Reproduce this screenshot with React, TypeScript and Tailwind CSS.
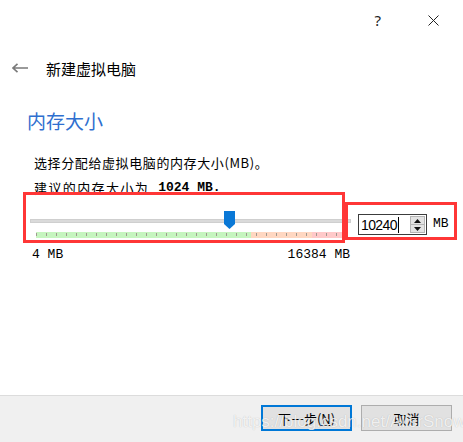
import React from "react";

const cjk = "font-['Noto_Sans_CJK_SC','Noto_Sans',sans-serif]";
const mono = "font-['Liberation_Mono','Noto_Sans_CJK_SC',monospace]";

function App() {
	const min = 4;
	const max = 16384;
	const value = 10240;
	const trackWidth = 321;
	const thumbLeft = Math.round(((value - min) / (max - min)) * (trackWidth - 11));
	const ticks = Array.from({ length: 31 });

	return (
		<div
			className={
				"relative w-[463px] h-[442px] overflow-hidden bg-white flex flex-col text-black " +
				cjk
			}
		>
			{/* title bar */}
			<div className="flex items-center justify-end h-[40px] pr-[24px] gap-[47px]">
				<span className="text-[15px] leading-none text-[#222] font-['Noto_Sans',sans-serif]">?</span>
				<svg width="11" height="11" viewBox="0 0 11 11">
					<path d="M0.5 0.5 L10.5 10.5 M10.5 0.5 L0.5 10.5" stroke="#222" strokeWidth="1" />
				</svg>
			</div>

			{/* header */}
			<div className="flex items-center h-[24px] mt-[16px] pl-[12px]">
				<svg width="16" height="10" viewBox="0 0 16 10">
					<path d="M1 5 H16 M5.5 0.8 L1 5 L5.5 9.2" stroke="#7a7a7a" strokeWidth="1.6" fill="none" />
				</svg>
				<span className="ml-[18px] text-[15px] leading-none">新建虚拟电脑</span>
			</div>

			{/* heading */}
			<div className="pl-[27px] mt-[28px] h-[24px] flex items-center text-[19px] leading-none text-[#2f6fcf]">
				内存大小
			</div>

			<div className="pl-[34px] mt-[20px] h-[20px] flex items-center text-[13px] tracking-[0.6px] leading-none">
				选择分配给虚拟电脑的内存大小(MB)。
			</div>
			<div className="pl-[34px] mt-[5px] h-[20px] flex items-center text-[13px] tracking-[1.4px] leading-none">
				建议的内存大小为
				<span className={"ml-[9px] font-bold tracking-normal text-[13px] " + mono}>1024 MB.</span>
			</div>

			{/* slider row */}
			<div className="flex items-start mt-[12px]">
				<div className="relative ml-[30px] w-[321px] h-[30px]">
					<div className="absolute left-0 right-0 top-[10px] h-[4px] bg-[#dadada] border border-[#cfcfcf]" />
					<div className="absolute top-[2px]" style={{ left: thumbLeft }}>
						<svg width="11" height="18" viewBox="0 0 11 18">
							<path d="M0 0 H11 V13 L5.5 18 L0 13 Z" fill="#0a78d6" />
						</svg>
					</div>
					<div className="absolute left-[6px] top-[23px] w-[306px] h-[6px] flex">
						<div className="w-[215px] bg-[#c6f5bf]" />
						<div className="w-[61px] bg-[#ffd7c1]" />
						<div className="flex-1 bg-[#ffc9c9]" />
						<div className="absolute inset-0 flex gap-[9px] pt-[1px]">
							{ticks.map((_, i) => (
								<div key={i} className="w-px h-[3px] bg-[#a09a90]" />
							))}
						</div>
					</div>
				</div>

				<div className="ml-[7px] mt-[5px] flex w-[69px] h-[21px] border border-[#3c3c3c] bg-white">
					<div className="flex-1 flex items-center pl-[2px]">
						<span className="text-[14px] tracking-[-0.6px] leading-none font-['Liberation_Sans',sans-serif]">10240</span>
						<div className="w-px h-[16px] bg-black ml-[1px]" />
					</div>
					<div className="w-[15px] my-[1px] mr-[1px] flex flex-col border border-[#b5b5b5] bg-[#e3e3e3]">
						<div className="flex-1 flex items-center justify-center border-b border-[#b5b5b5]">
							<svg width="7" height="4" viewBox="0 0 7 4">
								<path d="M0 4 L3.5 0 L7 4 Z" fill="#111" />
							</svg>
						</div>
						<div className="flex-1 flex items-center justify-center">
							<svg width="7" height="4" viewBox="0 0 7 4">
								<path d="M0 0 L3.5 4 L7 0 Z" fill="#111" />
							</svg>
						</div>
					</div>
				</div>
				<span className={"ml-[6px] mt-[7px] text-[13px] leading-[16px] " + mono}>MB</span>
			</div>

			{/* range labels */}
			<div className={"flex justify-between ml-[32px] w-[318px] mt-[7px] h-[16px] items-center text-[13px] leading-none " + mono}>
				<span>4 MB</span>
				<span>16384 MB</span>
			</div>

			<div className="flex-1" />

			{/* footer */}
			<div className="h-[47px] border-t border-[#dcdcdc] bg-[#f0f0f0] flex justify-end items-start pt-[9px] pr-[11px] gap-[9px]">
				<button className="w-[91px] h-[26px] border-2 border-[#0078d7] bg-[#e1e1e1] text-[13px] leading-none flex items-center justify-center">
					下一步(<span className="underline">N</span>)
				</button>
				<button className="w-[91px] h-[26px] border border-[#adadad] bg-[#e1e1e1] text-[13px] leading-none flex items-center justify-center">
					取消
				</button>
			</div>

			{/* annotation boxes */}
			<div className="absolute left-[23px] top-[192px] w-[322px] h-[51px] border-[3px] border-[#ff3636]" />
			<div className="absolute left-[345px] top-[202px] w-[112px] h-[38px] border-[3px] border-[#ff3636]" />

			{/* watermark */}
			<div className="absolute left-[233px] top-[413px] text-[17px] leading-none text-white/80 font-['Liberation_Sans',sans-serif] [text-shadow:0_0_1px_rgba(0,0,0,0.25)]">
				https://blog.csdn.net/AlisrSnow
			</div>
		</div>
	);
}

export default App;
